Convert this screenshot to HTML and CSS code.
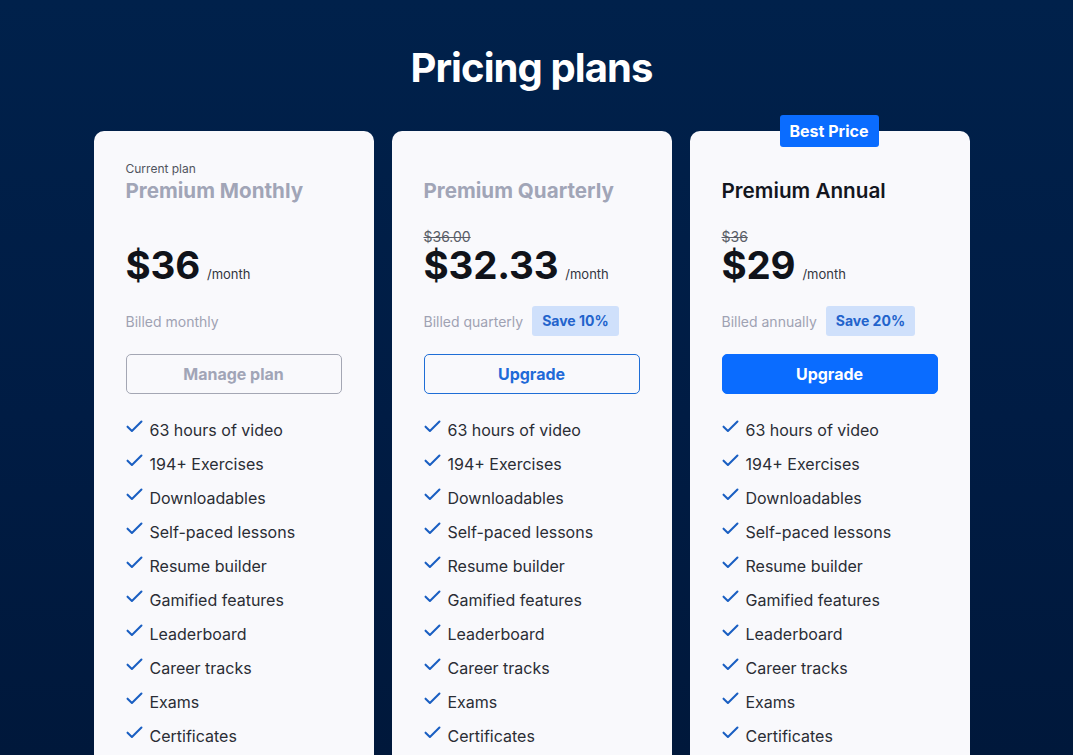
FILE: index.html
```html
<!DOCTYPE html>
<html lang="en">
<head>
<meta charset="utf-8">
<title>Pricing plans</title>
<link rel="stylesheet" href="styles.css">
</head>
<body>
<main class="page">
  <h1 class="title">Pricing plans</h1>
  <div class="plans">
    <section class="card">
      <div class="label">Current plan</div>
      <h2 class="name name-muted">Premium Monthly</h2>
      <div class="old-price"></div>
      <div class="price"><span class="amount">$36</span><span class="per">/month</span></div>
      <div class="billing"><span class="billed">Billed monthly</span></div>
      <button class="btn btn-muted">Manage plan</button>
      <ul class="features">
        <li><svg class="check" viewBox="0 0 18 14"><path d="M1.5 7.2 L6.2 11.8 L16.5 1.6"/></svg>63 hours of video</li>
        <li><svg class="check" viewBox="0 0 18 14"><path d="M1.5 7.2 L6.2 11.8 L16.5 1.6"/></svg>194+ Exercises</li>
        <li><svg class="check" viewBox="0 0 18 14"><path d="M1.5 7.2 L6.2 11.8 L16.5 1.6"/></svg>Downloadables</li>
        <li><svg class="check" viewBox="0 0 18 14"><path d="M1.5 7.2 L6.2 11.8 L16.5 1.6"/></svg>Self-paced lessons</li>
        <li><svg class="check" viewBox="0 0 18 14"><path d="M1.5 7.2 L6.2 11.8 L16.5 1.6"/></svg>Resume builder</li>
        <li><svg class="check" viewBox="0 0 18 14"><path d="M1.5 7.2 L6.2 11.8 L16.5 1.6"/></svg>Gamified features</li>
        <li><svg class="check" viewBox="0 0 18 14"><path d="M1.5 7.2 L6.2 11.8 L16.5 1.6"/></svg>Leaderboard</li>
        <li><svg class="check" viewBox="0 0 18 14"><path d="M1.5 7.2 L6.2 11.8 L16.5 1.6"/></svg>Career tracks</li>
        <li><svg class="check" viewBox="0 0 18 14"><path d="M1.5 7.2 L6.2 11.8 L16.5 1.6"/></svg>Exams</li>
        <li><svg class="check" viewBox="0 0 18 14"><path d="M1.5 7.2 L6.2 11.8 L16.5 1.6"/></svg>Certificates</li>
      </ul>
    </section>
    <section class="card">
      <div class="label"></div>
      <h2 class="name name-muted">Premium Quarterly</h2>
      <div class="old-price"><s>$36.00</s></div>
      <div class="price"><span class="amount">$32.33</span><span class="per">/month</span></div>
      <div class="billing"><span class="billed">Billed quarterly</span><span class="save">Save 10%</span></div>
      <button class="btn btn-outline">Upgrade</button>
      <ul class="features">
        <li><svg class="check" viewBox="0 0 18 14"><path d="M1.5 7.2 L6.2 11.8 L16.5 1.6"/></svg>63 hours of video</li>
        <li><svg class="check" viewBox="0 0 18 14"><path d="M1.5 7.2 L6.2 11.8 L16.5 1.6"/></svg>194+ Exercises</li>
        <li><svg class="check" viewBox="0 0 18 14"><path d="M1.5 7.2 L6.2 11.8 L16.5 1.6"/></svg>Downloadables</li>
        <li><svg class="check" viewBox="0 0 18 14"><path d="M1.5 7.2 L6.2 11.8 L16.5 1.6"/></svg>Self-paced lessons</li>
        <li><svg class="check" viewBox="0 0 18 14"><path d="M1.5 7.2 L6.2 11.8 L16.5 1.6"/></svg>Resume builder</li>
        <li><svg class="check" viewBox="0 0 18 14"><path d="M1.5 7.2 L6.2 11.8 L16.5 1.6"/></svg>Gamified features</li>
        <li><svg class="check" viewBox="0 0 18 14"><path d="M1.5 7.2 L6.2 11.8 L16.5 1.6"/></svg>Leaderboard</li>
        <li><svg class="check" viewBox="0 0 18 14"><path d="M1.5 7.2 L6.2 11.8 L16.5 1.6"/></svg>Career tracks</li>
        <li><svg class="check" viewBox="0 0 18 14"><path d="M1.5 7.2 L6.2 11.8 L16.5 1.6"/></svg>Exams</li>
        <li><svg class="check" viewBox="0 0 18 14"><path d="M1.5 7.2 L6.2 11.8 L16.5 1.6"/></svg>Certificates</li>
      </ul>
    </section>
    <section class="card card-best">
      <div class="ribbon">Best Price</div>
      <div class="label"></div>
      <h2 class="name">Premium Annual</h2>
      <div class="old-price"><s>$36</s></div>
      <div class="price"><span class="amount">$29</span><span class="per">/month</span></div>
      <div class="billing"><span class="billed">Billed annually</span><span class="save">Save 20%</span></div>
      <button class="btn btn-primary">Upgrade</button>
      <ul class="features">
        <li><svg class="check" viewBox="0 0 18 14"><path d="M1.5 7.2 L6.2 11.8 L16.5 1.6"/></svg>63 hours of video</li>
        <li><svg class="check" viewBox="0 0 18 14"><path d="M1.5 7.2 L6.2 11.8 L16.5 1.6"/></svg>194+ Exercises</li>
        <li><svg class="check" viewBox="0 0 18 14"><path d="M1.5 7.2 L6.2 11.8 L16.5 1.6"/></svg>Downloadables</li>
        <li><svg class="check" viewBox="0 0 18 14"><path d="M1.5 7.2 L6.2 11.8 L16.5 1.6"/></svg>Self-paced lessons</li>
        <li><svg class="check" viewBox="0 0 18 14"><path d="M1.5 7.2 L6.2 11.8 L16.5 1.6"/></svg>Resume builder</li>
        <li><svg class="check" viewBox="0 0 18 14"><path d="M1.5 7.2 L6.2 11.8 L16.5 1.6"/></svg>Gamified features</li>
        <li><svg class="check" viewBox="0 0 18 14"><path d="M1.5 7.2 L6.2 11.8 L16.5 1.6"/></svg>Leaderboard</li>
        <li><svg class="check" viewBox="0 0 18 14"><path d="M1.5 7.2 L6.2 11.8 L16.5 1.6"/></svg>Career tracks</li>
        <li><svg class="check" viewBox="0 0 18 14"><path d="M1.5 7.2 L6.2 11.8 L16.5 1.6"/></svg>Exams</li>
        <li><svg class="check" viewBox="0 0 18 14"><path d="M1.5 7.2 L6.2 11.8 L16.5 1.6"/></svg>Certificates</li>
      </ul>
    </section>
  </div>
</main>
</body>
</html>
```

FILE: styles.css
```css
* { box-sizing: border-box; }
html, body {
  margin: 0;
  padding: 0;
}
body {
  font-family: Inter, "Noto Sans", "Liberation Sans", sans-serif;
  background: linear-gradient(180deg, #00214b 0%, #001c44 55%, #00183b 100%);
  min-height: 100vh;
  color: #1b1f2a;
}
.page {
  padding: 44px 10px 0 0;
  height: 755px;
  overflow: hidden;
}
.title {
  margin: 0;
  text-align: center;
  color: #ffffff;
  font-size: 40px;
  line-height: 48px;
  font-weight: 700;
  letter-spacing: -0.9px;
}
.plans {
  display: flex;
  justify-content: center;
  gap: 18px;
  margin-top: 39px;
}
.card {
  position: relative;
  width: 280px;
  background: #f9f9fc;
  border-radius: 10px;
  padding: 30px 32px 60px;
}
.ribbon {
  position: absolute;
  top: -16px;
  left: 90px;
  width: 99px;
  height: 32px;
  background: #0a6cff;
  color: #fff;
  font-weight: 700;
  font-size: 16px;
  line-height: 32px;
  text-align: center;
  border-radius: 3px;
}
.label {
  height: 16px;
  font-size: 12px;
  line-height: 16px;
  color: #50545e;
}
.name {
  margin: 0;
  font-size: 20.7px;
  line-height: 27px;
  font-weight: 600;
  color: #13161e;
}
.name-muted {
  color: #a1a5b7;
  font-weight: 700;
  font-size: 20.6px;
}
.old-price {
  margin-top: 26px;
  height: 14px;
  font-size: 14px;
  line-height: 14px;
  color: #5a5e68;
}
.old-price s { text-decoration-thickness: 1px; }
.price {
  display: flex;
  align-items: baseline;
  height: 42px;
}
.amount {
  font-size: 38.5px;
  line-height: 42px;
  font-weight: 700;
  color: #10131a;
  letter-spacing: -0.2px;
}
.per {
  font-size: 13px;
  margin-left: 7px;
  color: #33363e;
}
.billing {
  display: flex;
  align-items: center;
  gap: 9px;
  margin-top: 20px;
  height: 30px;
}
.billed {
  font-size: 14px;
  color: #9fa2b3;
}
.save {
  background: #cfe0fb;
  color: #2263cc;
  font-size: 14px;
  font-weight: 700;
  height: 30px;
  line-height: 30px;
  padding: 0 10px;
  border-radius: 3px;
}
.btn {
  display: block;
  width: 216px;
  height: 40px;
  margin-top: 18px;
  border-radius: 5px;
  font-family: inherit;
  font-size: 16px;
  font-weight: 700;
  background: transparent;
  cursor: pointer;
}
.btn-muted {
  border: 1px solid #a4a7b4;
  color: #a1a5b7;
}
.btn-outline {
  border: 1px solid #1f6ed6;
  color: #1f6ad8;
}
.btn-primary {
  border: 1px solid #0a6cff;
  background: #0a6cff;
  color: #fff;
}
.features {
  list-style: none;
  margin: 19px 0 0;
  padding: 0;
}
.features li {
  display: flex;
  align-items: center;
  height: 34px;
  font-size: 16px;
  color: #2a2d35;
}
.check {
  width: 17px;
  height: 13px;
  margin-right: 7px;
  margin-top: -7px;
  flex: none;
}
.check path {
  fill: none;
  stroke: #1a5fc2;
  stroke-width: 2.2;
  stroke-linecap: round;
  stroke-linejoin: round;
}
```
